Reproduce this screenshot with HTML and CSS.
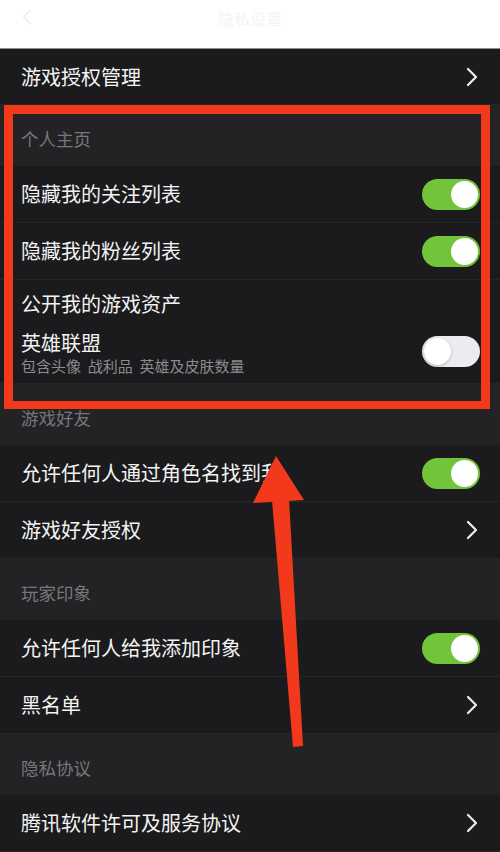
FILE: index.html
```html
<!DOCTYPE html>
<html lang="zh">
<head>
<meta charset="utf-8">
<link rel="stylesheet" href="styles.css">
</head>
<body>
<div class="page">
  <div class="topbar">
    <svg class="back" viewBox="0 0 12 20"><path d="M10 2 L2 10 L10 18" /></svg>
    <span class="title">隐私设置</span>
  </div>
  <div class="list">
    <div class="row first"><span class="label">游戏授权管理</span><svg class="chev" viewBox="0 0 12 20"><path d="M2 2 L10 10 L2 18" /></svg></div>
    <div class="header">个人主页</div>
    <div class="row"><span class="label">隐藏我的关注列表</span><span class="toggle on"><span class="knob"></span></span></div>
    <div class="row"><span class="label">隐藏我的粉丝列表</span><span class="toggle on"><span class="knob"></span></span></div>
    <div class="row tall">
      <div class="stack">
        <span class="label">公开我的游戏资产</span>
        <span class="label second">英雄联盟</span>
        <span class="sub">包含头像&nbsp; 战利品&nbsp; 英雄及皮肤数量</span>
      </div>
      <span class="toggle off"><span class="knob"></span></span>
    </div>
    <div class="header">游戏好友</div>
    <div class="row"><span class="label">允许任何人通过角色名找到我</span><span class="toggle on"><span class="knob"></span></span></div>
    <div class="row"><span class="label">游戏好友授权</span><svg class="chev" viewBox="0 0 12 20"><path d="M2 2 L10 10 L2 18" /></svg></div>
    <div class="header">玩家印象</div>
    <div class="row"><span class="label">允许任何人给我添加印象</span><span class="toggle on"><span class="knob"></span></span></div>
    <div class="row"><span class="label">黑名单</span><svg class="chev" viewBox="0 0 12 20"><path d="M2 2 L10 10 L2 18" /></svg></div>
    <div class="header">隐私协议</div>
    <div class="row"><span class="label">腾讯软件许可及服务协议</span><svg class="chev" viewBox="0 0 12 20"><path d="M2 2 L10 10 L2 18" /></svg></div>
  </div>
  <div class="highlight"></div>
  <svg class="arrow" viewBox="0 0 500 852" width="500" height="852">
    <polygon points="276,456 304,500 253,503" fill="#f2391c"/>
    <polygon points="272,500 289,499 303,746 293,747" fill="#f2391c"/>
  </svg>
</div>
</body>
</html>
```

FILE: styles.css
```css
* { box-sizing: border-box; }
html, body { margin: 0; padding: 0; }
body {
  width: 500px;
  height: 852px;
  overflow: hidden;
  background: #1b1b1d;
  font-family: "Noto Sans CJK SC", "Noto Sans", sans-serif;
}
.page { position: relative; width: 500px; height: 852px; }
.topbar {
  height: 49px;
  background: #ffffff;
  border-bottom: 1px solid #8d8d8f;
  position: relative;
  display: flex;
  align-items: flex-start;
  justify-content: center;
  padding-top: 8px;
}
.back {
  position: absolute;
  left: 22px;
  top: 8px;
  width: 10px;
  height: 18px;
}
.back path { fill: none; stroke: #eeeeee; stroke-width: 2; stroke-linecap: round; stroke-linejoin: round; }
.title { font-size: 16px; line-height: 20px; color: #f4f4f4; }
.list { display: flex; flex-direction: column; }
.row {
  height: 57px;
  background: #1b1b1d;
  display: flex;
  align-items: center;
  justify-content: space-between;
  padding: 0 20px 0 21px;
  border-bottom: 1px solid #262629;
}
.row.first { height: 56px; }
.label { color: #f3f3f3; font-size: 20px; line-height: 24px; }
.header {
  height: 61px;
  background: #232326;
  color: #77777b;
  font-size: 17.5px;
  padding: 23px 0 0 21px;
  line-height: 22px;
}
.row.tall { height: 104px; align-items: flex-start; padding-top: 12px; }
.stack { display: flex; flex-direction: column; }
.second { margin-top: 15px; line-height: 24px; }
.sub { color: #8b8b8f; font-size: 15px; line-height: 18px; margin-top: 2px; }
.row.tall .toggle { margin-top: 44px; }
.toggle {
  width: 58px;
  height: 31px;
  border-radius: 16px;
  position: relative;
  flex: none;
}
.toggle.on { background: #72c53a; }
.toggle.off { background: #ececf0; }
.knob {
  position: absolute;
  top: 2px;
  width: 27px;
  height: 27px;
  border-radius: 50%;
  background: #ffffff;
}
.toggle.on .knob { right: 2px; }
.toggle.off .knob { left: 2px; box-shadow: 0 1px 3px rgba(0,0,0,0.25); }
.chev { width: 12px; height: 20px; margin-right: 2px; }
.chev path { fill: none; stroke: #f0f0f0; stroke-width: 2.2; stroke-linecap: round; stroke-linejoin: round; }
.highlight {
  position: absolute;
  left: 4px;
  top: 105px;
  width: 486px;
  height: 304px;
  border: 9px solid #f2391c;
  border-bottom-width: 8px;
}
.arrow { position: absolute; left: 0; top: 0; }
```
